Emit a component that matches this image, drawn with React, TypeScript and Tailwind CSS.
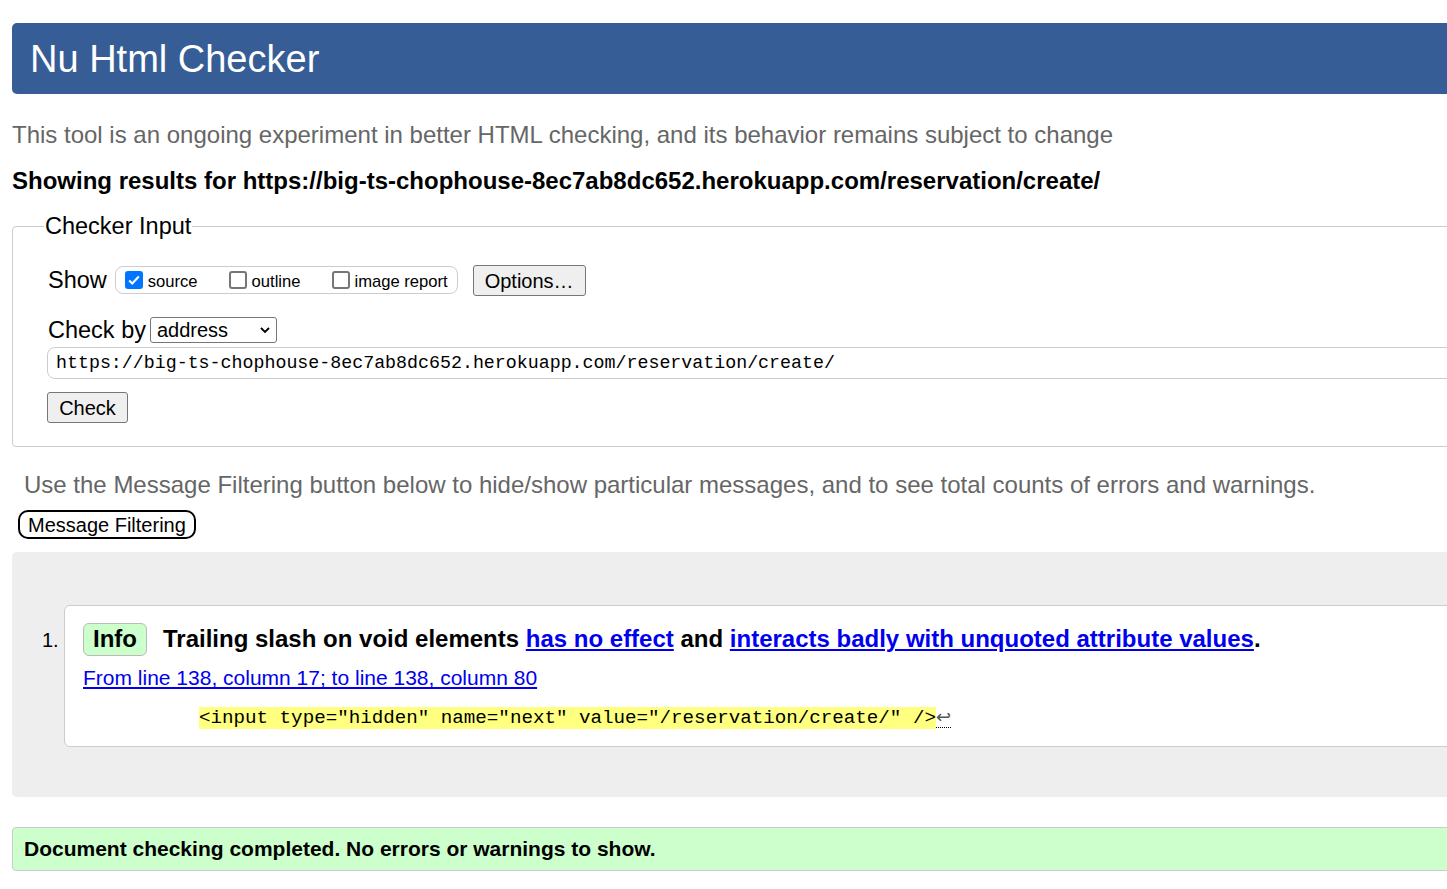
import { useState } from "react";

const sans = "font-['Liberation_Sans',Arial,sans-serif]";
const mono = "font-['Liberation_Mono','DejaVu_Sans_Mono',monospace]";

function Check({ checked, label }: { checked?: boolean; label: string }) {
  const [on, setOn] = useState(!!checked);
  return (
    <label className="flex items-center gap-[5px] mr-[31px] last:mr-0">
      <span
        onClick={() => setOn(!on)}
        className={`w-[18px] h-[18px] rounded-[3px] flex items-center justify-center ${
          on ? "bg-[#0075ff]" : "border-2 border-[#767676] bg-white"
        }`}
      >
        {on && (
          <svg viewBox="0 0 16 16" className="w-[14px] h-[14px]">
            <path d="M2.5 8.5l3.5 3.5 7.5-8" fill="none" stroke="white" strokeWidth="2.4" />
          </svg>
        )}
      </span>
      <span className="text-[16.6px] mt-[5px]">{label}</span>
    </label>
  );
}

export default function App() {
  return (
    <div className={`w-[1447px] h-[889px] overflow-hidden bg-white text-black ${sans}`}>
      <div className="w-[1500px] pl-[12px] pt-[23px]">
        {/* titulo */}
        <header className="h-[71px] bg-[#365d95] rounded-[5px] flex items-center pl-[18px]">
          <h1 className="text-[38px] text-white leading-none mt-[1px]">Nu Html Checker</h1>
        </header>

        <p className="mt-[29px] text-[24px] leading-none text-[#666]">
          This tool is an ongoing experiment in better HTML checking, and its behavior remains subject to change
        </p>
        <p className="mt-[22px] text-[24px] leading-none font-bold">
          Showing results for https://big-ts-chophouse-8ec7ab8dc652.herokuapp.com/reservation/create/
        </p>

        {/* Checker Input */}
        <fieldset className="mt-[16px] border border-[#ccc] rounded-l-[4px] pl-[35px] pb-[23px]">
          <legend className="text-[23.5px] px-[1px] -ml-[4px] -mb-[2px]">Checker Input</legend>

          <div className="flex items-center mt-[22px] h-[32px]">
            <span className="text-[23.5px] mr-[8px]">Show</span>
            <div className="flex items-center h-[28px] border border-[#ccc] rounded-[8px] pl-[9px] pr-[9px]">
              <Check checked label="source" />
              <Check label="outline" />
              <Check label="image report" />
            </div>
            <button className="ml-[15px] h-[31px] px-[11px] text-[20px] bg-[#efefef] border border-[#767676] rounded-[3px]">
              Options…
            </button>
          </div>

          <div className="flex items-center mt-[20px] h-[28px]">
            <span className="text-[23.5px] mr-[4px]">Check by</span>
            <div className="w-[127px] h-[26px] border border-[#767676] rounded-[3px] flex items-center justify-between pl-[6px] pr-[5px]">
              <span className="text-[20px]">address</span>
              <svg viewBox="0 0 12 12" className="w-[12px] h-[12px]">
                <path d="M2 4l4 4 4-4" fill="none" stroke="black" strokeWidth="1.8" />
              </svg>
            </div>
          </div>

          <div className={`mt-[3px] -ml-[1px] h-[32px] border border-[#ccc] rounded-l-[8px] flex items-center pl-[8px] ${mono} text-[18.3px]`}>
            https://big-ts-chophouse-8ec7ab8dc652.herokuapp.com/reservation/create/
          </div>

          <button className="mt-[13px] -ml-[1px] h-[31px] w-[81px] text-[20px] bg-[#efefef] border border-[#767676] rounded-[3px]">
            Check
          </button>
        </fieldset>

        <p className="mt-[26px] ml-[12px] text-[24px] leading-none text-[#666]">
          Use the Message Filtering button below to hide/show particular messages, and to see total counts of errors and warnings.
        </p>
        <button className="mt-[13px] ml-[6px] h-[29px] px-[8px] text-[20px] leading-none border-2 border-black rounded-[10px] bg-white">
          Message Filtering
        </button>

        {/* mensagens */}
        <section className="mt-[13px] bg-[#eee] rounded-l-[5px] pt-[53px] pb-[50px] flex">
          <span className="w-[52px] pt-[20px] pl-[30px] text-[20px]">1.</span>
          <div className="flex-1 bg-white border border-[#ccc] rounded-l-[6px] pl-[18px] pt-[15px] pb-[16px]">
            <p className="flex items-center text-[24px] font-bold">
              <span className="h-[33px] px-[9px] mr-[16px] bg-[#ccffcc] border border-[#bbb] rounded-[6px] flex items-center">
                Info
              </span>
              <span>
                Trailing slash on void elements{" "}
                <a href="#" className="text-[#0000ee] underline">has no effect</a> and{" "}
                <a href="#" className="text-[#0000ee] underline">interacts badly with unquoted attribute values</a>.
              </span>
            </p>
            <p className="mt-[5px] text-[21px]">
              <a href="#" className="text-[#0000ee] underline">From line 138, column 17; to line 138, column 80</a>
            </p>
            <p className={`mt-[12px] ml-[116px] ${mono} text-[19.2px] leading-[23px]`}>
              <span className="bg-[#ffff80]">{'<input type="hidden" name="next" value="/reservation/create/" />'}</span>
              <span className={`${sans} text-[18px] text-[#555] border-b border-dotted border-black`}>↩</span>
            </p>
          </div>
        </section>

        <div className="mt-[30px] h-[44px] bg-[#ccffcc] border border-[#ccc] rounded-l-[4px] flex items-center pl-[11px] text-[21px] font-bold">
          Document checking completed. No errors or warnings to show.
        </div>
      </div>
    </div>
  );
}
